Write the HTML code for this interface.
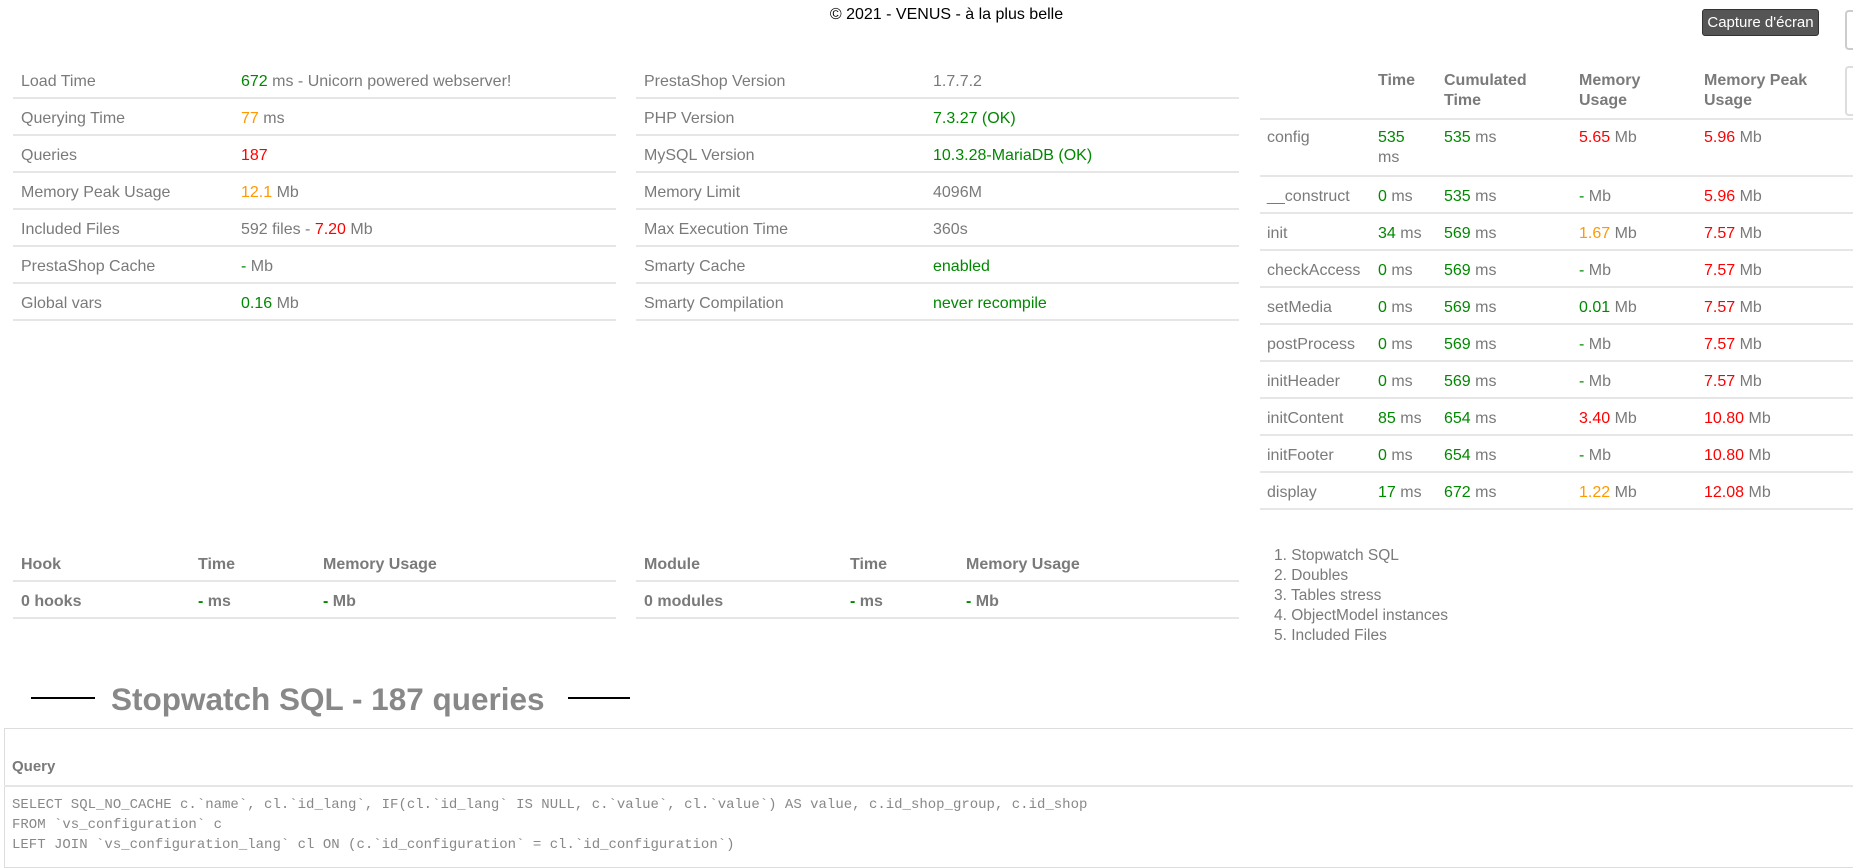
<!DOCTYPE html>
<html><head><meta charset="utf-8"><style>
*{margin:0;padding:0;box-sizing:border-box}
body{width:1853px;height:865px;overflow:hidden;background:#fff;font-family:"Liberation Sans",Arial,sans-serif;font-size:16px;color:#7a7a7a;position:relative}
.a{position:absolute;white-space:nowrap}
.g{color:#080}.o{color:#f90}.r{color:#f00}
i{font-style:normal}
.row{position:absolute;height:37px;border-bottom:2px solid #e6e6e6}
.row span{position:absolute;top:11px;white-space:nowrap}
.mono{font-family:"Liberation Mono",monospace;font-size:14px;color:#888;position:absolute;left:12px;white-space:nowrap}
</style></head><body>
<div class="a" style="left:0;width:1893px;text-align:center;top:6px;color:#000;font-size:16px">© 2021 - VENUS - à la plus belle</div>
<div class="a" style="left:1702px;top:9px;width:117px;height:27px;background:#555;border:1px solid #333;border-radius:3px;color:#fff;font-size:15px;text-align:center;line-height:25px">Capture d'écran</div>
<div class="a" style="left:1845px;top:10px;width:8px;height:40px;border:2px solid #ccc;border-radius:4px 0 0 4px;border-right:none"></div>
<div class="a" style="left:1845px;top:66px;width:8px;height:50px;border:2px solid #ddd;border-radius:4px 0 0 4px;border-right:none"></div>

<div class="row" style="left:13px;width:603px;top:62px"><span style="left:8px">Load Time</span><span style="left:228px"><i class="g">672</i> ms - Unicorn powered webserver!</span></div>
<div class="row" style="left:13px;width:603px;top:99px"><span style="left:8px">Querying Time</span><span style="left:228px"><i class="o">77</i> ms</span></div>
<div class="row" style="left:13px;width:603px;top:136px"><span style="left:8px">Queries</span><span style="left:228px" class="r">187</span></div>
<div class="row" style="left:13px;width:603px;top:173px"><span style="left:8px">Memory Peak Usage</span><span style="left:228px"><i class="o">12.1</i> Mb</span></div>
<div class="row" style="left:13px;width:603px;top:210px"><span style="left:8px">Included Files</span><span style="left:228px">592 files - <i class="r">7.20</i> Mb</span></div>
<div class="row" style="left:13px;width:603px;top:247px"><span style="left:8px">PrestaShop Cache</span><span style="left:228px"><i class="g">-</i> Mb</span></div>
<div class="row" style="left:13px;width:603px;top:284px"><span style="left:8px">Global vars</span><span style="left:228px"><i class="g">0.16</i> Mb</span></div>

<div class="row" style="left:636px;width:603px;top:62px"><span style="left:8px">PrestaShop Version</span><span style="left:297px">1.7.7.2</span></div>
<div class="row" style="left:636px;width:603px;top:99px"><span style="left:8px">PHP Version</span><span style="left:297px" class="g">7.3.27 (OK)</span></div>
<div class="row" style="left:636px;width:603px;top:136px"><span style="left:8px">MySQL Version</span><span style="left:297px" class="g">10.3.28-MariaDB (OK)</span></div>
<div class="row" style="left:636px;width:603px;top:173px"><span style="left:8px">Memory Limit</span><span style="left:297px">4096M</span></div>
<div class="row" style="left:636px;width:603px;top:210px"><span style="left:8px">Max Execution Time</span><span style="left:297px">360s</span></div>
<div class="row" style="left:636px;width:603px;top:247px"><span style="left:8px">Smarty Cache</span><span style="left:297px" class="g">enabled</span></div>
<div class="row" style="left:636px;width:603px;top:284px"><span style="left:8px">Smarty Compilation</span><span style="left:297px" class="g">never recompile</span></div>

<div class="row" style="left:1260px;width:593px;top:62px;height:58px;font-weight:bold;line-height:20px"><span style="left:118px;top:9px">Time</span><span style="left:184px;top:9px">Cumulated<br>Time</span><span style="left:319px;top:9px">Memory<br>Usage</span><span style="left:444px;top:9px">Memory Peak<br>Usage</span></div>
<div class="row" style="left:1260px;width:593px;top:120px;height:57px;line-height:20px"><span style="left:7px;top:8px">config</span><span style="left:118px;top:8px"><i class="g">535</i><br>ms</span><span style="left:184px;top:8px"><i class="g">535</i> ms</span><span style="left:319px;top:8px"><i class="r">5.65</i> Mb</span><span style="left:444px;top:8px"><i class="r">5.96</i> Mb</span></div>
<div class="row" style="left:1260px;width:593px;top:177px"><span style="left:7px">__construct</span><span style="left:118px"><i class="g">0</i> ms</span><span style="left:184px"><i class="g">535</i> ms</span><span style="left:319px"><i class="g">-</i> Mb</span><span style="left:444px"><i class="r">5.96</i> Mb</span></div>
<div class="row" style="left:1260px;width:593px;top:214px"><span style="left:7px">init</span><span style="left:118px"><i class="g">34</i> ms</span><span style="left:184px"><i class="g">569</i> ms</span><span style="left:319px"><i class="o">1.67</i> Mb</span><span style="left:444px"><i class="r">7.57</i> Mb</span></div>
<div class="row" style="left:1260px;width:593px;top:251px"><span style="left:7px">checkAccess</span><span style="left:118px"><i class="g">0</i> ms</span><span style="left:184px"><i class="g">569</i> ms</span><span style="left:319px"><i class="g">-</i> Mb</span><span style="left:444px"><i class="r">7.57</i> Mb</span></div>
<div class="row" style="left:1260px;width:593px;top:288px"><span style="left:7px">setMedia</span><span style="left:118px"><i class="g">0</i> ms</span><span style="left:184px"><i class="g">569</i> ms</span><span style="left:319px"><i class="g">0.01</i> Mb</span><span style="left:444px"><i class="r">7.57</i> Mb</span></div>
<div class="row" style="left:1260px;width:593px;top:325px"><span style="left:7px">postProcess</span><span style="left:118px"><i class="g">0</i> ms</span><span style="left:184px"><i class="g">569</i> ms</span><span style="left:319px"><i class="g">-</i> Mb</span><span style="left:444px"><i class="r">7.57</i> Mb</span></div>
<div class="row" style="left:1260px;width:593px;top:362px"><span style="left:7px">initHeader</span><span style="left:118px"><i class="g">0</i> ms</span><span style="left:184px"><i class="g">569</i> ms</span><span style="left:319px"><i class="g">-</i> Mb</span><span style="left:444px"><i class="r">7.57</i> Mb</span></div>
<div class="row" style="left:1260px;width:593px;top:399px"><span style="left:7px">initContent</span><span style="left:118px"><i class="g">85</i> ms</span><span style="left:184px"><i class="g">654</i> ms</span><span style="left:319px"><i class="r">3.40</i> Mb</span><span style="left:444px"><i class="r">10.80</i> Mb</span></div>
<div class="row" style="left:1260px;width:593px;top:436px"><span style="left:7px">initFooter</span><span style="left:118px"><i class="g">0</i> ms</span><span style="left:184px"><i class="g">654</i> ms</span><span style="left:319px"><i class="g">-</i> Mb</span><span style="left:444px"><i class="r">10.80</i> Mb</span></div>
<div class="row" style="left:1260px;width:593px;top:473px"><span style="left:7px">display</span><span style="left:118px"><i class="g">17</i> ms</span><span style="left:184px"><i class="g">672</i> ms</span><span style="left:319px"><i class="o">1.22</i> Mb</span><span style="left:444px"><i class="r">12.08</i> Mb</span></div>

<div class="row" style="left:13px;width:603px;top:545px;font-weight:bold"><span style="left:8px">Hook</span><span style="left:185px">Time</span><span style="left:310px">Memory Usage</span></div>
<div class="row" style="left:13px;width:603px;top:582px;font-weight:bold"><span style="left:8px">0 hooks</span><span style="left:185px"><i class="g">-</i> ms</span><span style="left:310px"><i class="g">-</i> Mb</span></div>
<div class="row" style="left:636px;width:603px;top:545px;font-weight:bold"><span style="left:8px">Module</span><span style="left:214px">Time</span><span style="left:330px">Memory Usage</span></div>
<div class="row" style="left:636px;width:603px;top:582px;font-weight:bold"><span style="left:8px">0 modules</span><span style="left:214px"><i class="g">-</i> ms</span><span style="left:330px"><i class="g">-</i> Mb</span></div>

<div class="a" style="left:1274px;top:546px;line-height:20px;font-size:15.5px">1. Stopwatch SQL<br>2. Doubles<br>3. Tables stress<br>4. ObjectModel instances<br>5. Included Files</div>

<div class="a" style="left:31px;top:697px;width:64px;height:2px;background:#000"></div>
<div class="a" style="left:111px;top:681px;font-size:31.5px;font-weight:bold;color:#888">Stopwatch SQL - 187 queries</div>
<div class="a" style="left:568px;top:697px;width:62px;height:2px;background:#000"></div>

<div class="a" style="left:4px;top:728px;width:1849px;height:140px;border:1px solid #ddd;border-right:none"></div>
<div class="a" style="left:12px;top:758px;font-weight:bold;font-size:15px">Query</div>
<div class="a" style="left:4px;top:785px;width:1849px;height:2px;background:#e6e6e6"></div>
<div class="mono" style="top:797px">SELECT SQL_NO_CACHE c.`name`, cl.`id_lang`, IF(cl.`id_lang` IS NULL, c.`value`, cl.`value`) AS value, c.id_shop_group, c.id_shop</div>
<div class="mono" style="top:817px">FROM `vs_configuration` c</div>
<div class="mono" style="top:837px">LEFT JOIN `vs_configuration_lang` cl ON (c.`id_configuration` = cl.`id_configuration`)</div>
</body></html>
